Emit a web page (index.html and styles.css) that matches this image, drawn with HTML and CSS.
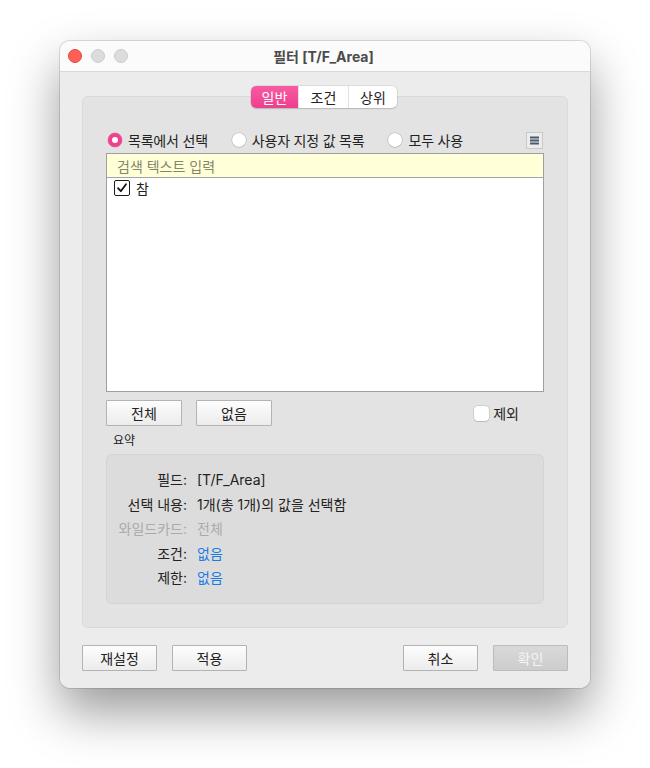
FILE: index.html
```html
<!DOCTYPE html>
<html lang="ko">
<head>
    <meta charset="UTF-8" />
    <meta name="viewport" content="width=device-width, initial-scale=1.0" />
    <title>필터 [T/F_Area]</title>
    <link rel="stylesheet" href="styles.css">
</head>
<body>
    <div class="window">
        <div class="titlebar">
            <div class="lights">
                <span class="light red"></span>
                <span class="light"></span>
                <span class="light"></span>
            </div>
            <div class="title">필터 [T/F_Area]</div>
        </div>

        <div class="content">
            <div class="tabs">
                <div class="tab active">일반</div>
                <div class="tab">조건</div>
                <div class="tab">상위</div>
            </div>

            <div class="panel">
                <div class="radio-row">
                    <label class="radio-opt"><span class="radio checked"></span>목록에서 선택</label>
                    <label class="radio-opt"><span class="radio"></span>사용자 지정 값 목록</label>
                    <label class="radio-opt"><span class="radio"></span>모두 사용</label>
                    <div class="menu-btn">
                        <svg width="9" height="9" viewBox="0 0 9 9">
                            <rect x="0" y="0.5" width="9" height="2" fill="#4b5b69" />
                            <rect x="0" y="3.5" width="9" height="2" fill="#4b5b69" />
                            <rect x="0" y="6.5" width="9" height="2" fill="#4b5b69" />
                        </svg>
                    </div>
                </div>

                <div class="listbox">
                    <div class="search">검색 텍스트 입력</div>
                    <div class="items">
                        <div class="item">
                            <span class="check">
                                <svg width="12" height="12" viewBox="0 0 12 12">
                                    <path d="M2 6.2 L4.8 9.2 L10 2.2" fill="none" stroke="#111" stroke-width="1.8" stroke-linecap="round" stroke-linejoin="round" />
                                </svg>
                            </span>
                            참
                        </div>
                    </div>
                </div>

                <div class="list-actions">
                    <button class="btn">전체</button>
                    <button class="btn">없음</button>
                    <label class="exclude"><span class="box"></span>제외</label>
                </div>

                <div class="summary-label">요약</div>
                <div class="summary">
                    <div class="s-key">필드:</div><div class="s-val">[T/F_Area]</div>
                    <div class="s-key">선택 내용:</div><div class="s-val">1개(총 1개)의 값을 선택함</div>
                    <div class="s-key muted">와일드카드:</div><div class="s-val muted">전체</div>
                    <div class="s-key">조건:</div><div class="s-val link">없음</div>
                    <div class="s-key">제한:</div><div class="s-val link">없음</div>
                </div>
            </div>

            <div class="footer">
                <button class="btn">재설정</button>
                <button class="btn">적용</button>
                <span class="spacer"></span>
                <button class="btn">취소</button>
                <button class="btn disabled">확인</button>
            </div>
        </div>
    </div>
</body>
</html>
```

FILE: styles.css
```css
html, body {
    margin: 0;
    background: #ffffff;
}
body {
    min-height: 100vh;
    box-sizing: border-box;
    padding: 41px 0 0 60px;
    font-family: "Inter", "Noto Sans CJK KR", sans-serif;
    font-size: 13px;
    color: #222;
}
.window {
    width: 530px;
    height: 647px;
    border-radius: 10px;
    overflow: hidden;
    display: flex;
    flex-direction: column;
    box-shadow: 0 24px 50px rgba(0, 0, 0, 0.4), 0 0 0 1px rgba(0, 0, 0, 0.12);
}
.titlebar {
    height: 30px;
    flex-shrink: 0;
    background: #fbfbfb;
    border-bottom: 1px solid #d9d9d9;
    position: relative;
    display: flex;
    align-items: center;
    justify-content: center;
}
.lights {
    position: absolute;
    left: 8px;
    top: 8px;
    display: flex;
    gap: 9px;
}
.light {
    width: 12px;
    height: 12px;
    border-radius: 50%;
    background: #dcdcdc;
    border: 0.5px solid #cbcbcb;
}
.light.red {
    background: #fe5f57;
    border-color: #e3463f;
}
.title {
    font-weight: 700;
    font-size: 14px;
    color: #4b4b4b;
    margin-left: -3px;
}
.content {
    flex: 1;
    background: #ececec;
    padding: 14px 22px 17px;
    display: flex;
    flex-direction: column;
}
.tabs {
    align-self: center;
    display: flex;
    height: 22px;
    margin-bottom: -12px;
    position: relative;
    z-index: 1;
    background: #fff;
    border-radius: 5px;
    box-shadow: 0 0 0 0.5px rgba(0, 0, 0, 0.14), 0 1px 1.5px rgba(0, 0, 0, 0.12);
    margin-left: -2px;
}
.tab {
    display: flex;
    align-items: center;
    justify-content: center;
    font-size: 14px;
    color: #222;
    border-left: 1px solid #e2e2e2;
}
.tab:nth-child(1) { width: 47px; border-left: none; }
.tab:nth-child(2) { width: 49px; }
.tab:nth-child(3) { width: 48px; }
.tab.active {
    background: linear-gradient(#f85ba4, #ee3e8c);
    color: #fff;
    border-radius: 5px 0 0 5px;
}
.panel {
    flex: 1;
    background: #e3e3e3;
    border: 1px solid #dadada;
    border-radius: 6px;
    padding: 33px 23px 23px;
    display: flex;
    flex-direction: column;
}
.radio-row {
    height: 20px;
    display: flex;
    align-items: center;
    margin-bottom: 3px;
}
.radio-opt {
    display: flex;
    align-items: center;
    font-size: 14px;
    margin-right: 24px;
    letter-spacing: -0.2px;
}
.radio-opt:first-child { margin-left: 2px; }
.radio {
    width: 14px;
    height: 14px;
    border-radius: 50%;
    background: #fff;
    box-shadow: 0 0 0 0.5px rgba(0, 0, 0, 0.2), 0 0.5px 1px rgba(0, 0, 0, 0.15);
    margin-right: 6px;
    box-sizing: border-box;
}
.radio.checked {
    border: 4.5px solid #f0438f;
    background: #fff;
    box-shadow: 0 0 0 0.5px rgba(200, 30, 100, 0.4);
}
.menu-btn {
    margin-left: auto;
    margin-right: 1px;
    width: 15px;
    height: 15px;
    background: #ececec;
    border: 1px solid #c9c9c9;
    display: flex;
    align-items: center;
    justify-content: center;
}
.listbox {
    height: 239px;
    box-sizing: border-box;
    border: 1px solid #9f9f9f;
    background: #fff;
    display: flex;
    flex-direction: column;
}
.search {
    height: 23px;
    background: #ffffd8;
    border-bottom: 1px solid #a4a4a4;
    color: #85856c;
    font-size: 14px;
    display: flex;
    align-items: center;
    padding-left: 10px;
}
.items {
    padding: 1px 7px;
}
.item {
    display: flex;
    align-items: center;
    height: 18px;
    font-size: 14px;
}
.check {
    width: 16px;
    height: 16px;
    box-sizing: border-box;
    border: 1.5px solid #1c1c1c;
    border-radius: 2px;
    display: flex;
    align-items: center;
    justify-content: center;
    margin-right: 6px;
}
.list-actions {
    margin-top: 8px;
    display: flex;
    align-items: center;
    gap: 14px;
}
.btn {
    width: 76px;
    height: 26px;
    box-sizing: border-box;
    border: 1px solid #b3b3b3;
    border-radius: 1px;
    background: linear-gradient(#fdfdfd, #ececec);
    font-family: inherit;
    font-size: 14px;
    color: #222;
    padding: 0;
}
.btn.disabled {
    background: linear-gradient(#d9d9d9, #cdcdcd);
    border-color: #bcbcbc;
    color: #f4f4f4;
}
.exclude {
    margin-left: auto;
    margin-right: 25px;
    display: flex;
    align-items: center;
    font-size: 14px;
}
.exclude .box {
    width: 15px;
    height: 15px;
    background: #fff;
    border-radius: 4px;
    box-shadow: 0 0 0 0.5px rgba(0, 0, 0, 0.15), 0 0.5px 1px rgba(0, 0, 0, 0.12);
    margin-right: 4px;
}
.summary-label {
    margin: 8px 0 6px 7px;
    height: 14px;
    line-height: 14px;
    font-size: 12px;
}
.summary {
    height: 150px;
    box-sizing: border-box;
    background: #dcdcdc;
    border: 1px solid #d4d4d4;
    border-radius: 6px;
    padding-top: 13px;
    display: grid;
    grid-template-columns: 80px 1fr;
    grid-auto-rows: 24.5px;
    column-gap: 10px;
    align-content: start;
    font-size: 14px;
}
.s-key {
    text-align: right;
    line-height: 24.5px;
}
.s-val {
    line-height: 24.5px;
}
.muted { color: #ababab; }
.link { color: #1a7de6; }
.footer {
    margin-top: 17px;
    display: flex;
    gap: 15px;
}
.footer .btn { width: 75px; }
.spacer { flex: 1; }
```
